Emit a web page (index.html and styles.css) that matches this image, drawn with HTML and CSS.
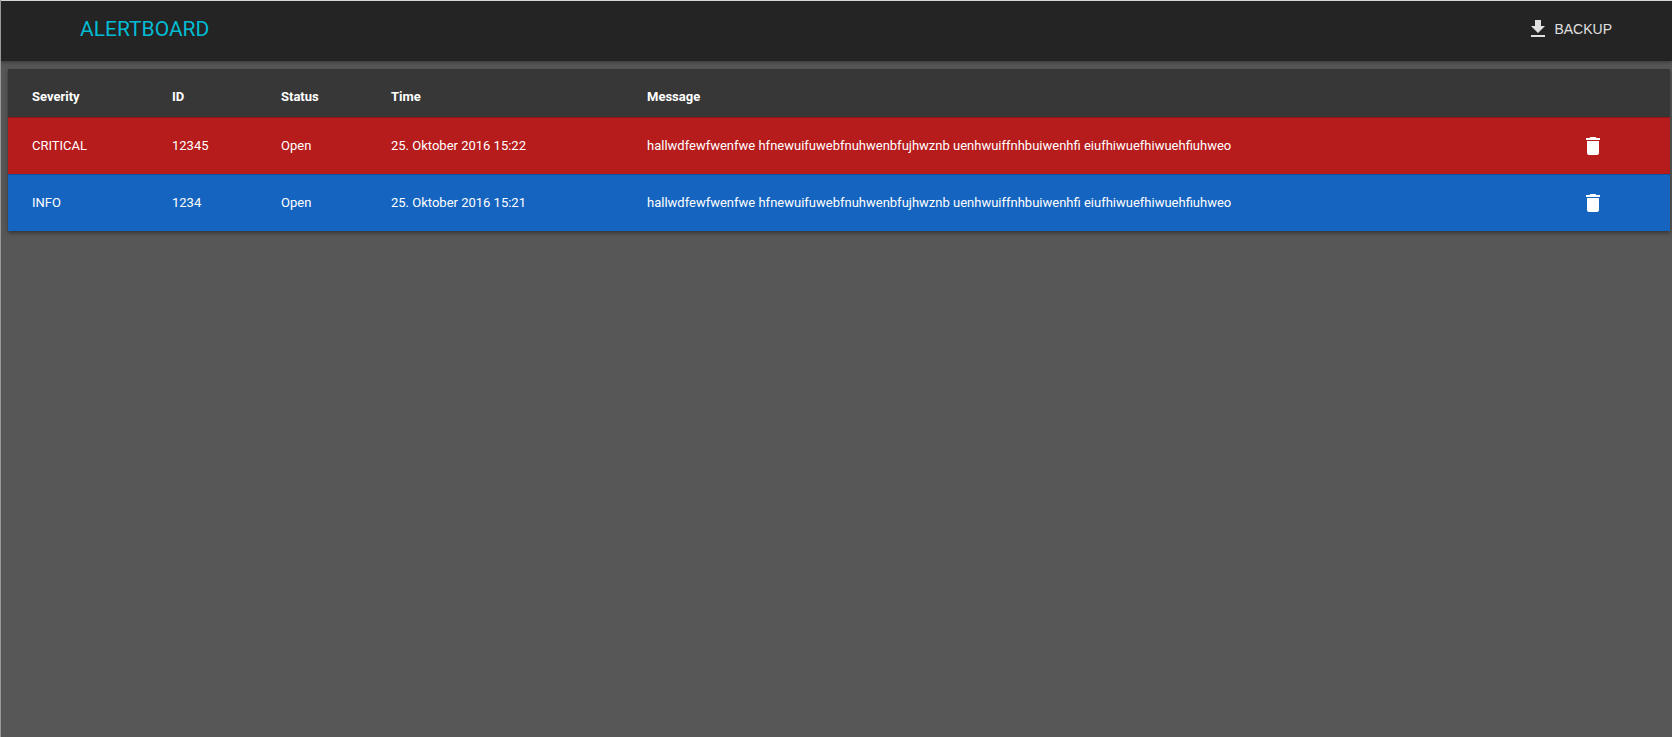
FILE: index.html
```html
<!DOCTYPE html>
<html lang="en">
<head>
<meta charset="utf-8">
<title>Alertboard</title>
<link rel="stylesheet" href="styles.css">
</head>
<body>
<header class="bar">
  <h1 class="brand">ALERTBOARD</h1>
  <button class="backup" type="button">
    <svg class="icon" viewBox="0 0 24 24" aria-hidden="true"><path d="M19 9h-4V3H9v6H5l7 7 7-7zM5 18v2h14v-2H5z"/></svg>
    BACKUP
  </button>
</header>
<main class="content">
  <table class="alerts">
    <colgroup>
      <col class="col-severity"><col class="col-id"><col class="col-status"><col class="col-time"><col><col class="col-action">
    </colgroup>
    <thead>
      <tr><th>Severity</th><th>ID</th><th>Status</th><th>Time</th><th>Message</th><th></th></tr>
    </thead>
    <tbody>
      <tr class="critical">
        <td>CRITICAL</td><td>12345</td><td>Open</td><td>25. Oktober 2016 15:22</td>
        <td>hallwdfewfwenfwe hfnewuifuwebfnuhwenbfujhwznb uenhwuiffnhbuiwenhfi eiufhiwuefhiwuehfiuhweo</td>
        <td><button class="delete" type="button" aria-label="Delete alert 12345"><svg class="icon" viewBox="0 0 24 24" aria-hidden="true"><path d="M6 19c0 1.1.9 2 2 2h8c1.1 0 2-.9 2-2V7H6v12zM19 4h-3.500l-1-1h-5l-1 1H5v2h14V4z"/></svg></button></td>
      </tr>
      <tr class="info">
        <td>INFO</td><td>1234</td><td>Open</td><td>25. Oktober 2016 15:21</td>
        <td>hallwdfewfwenfwe hfnewuifuwebfnuhwenbfujhwznb uenhwuiffnhbuiwenhfi eiufhiwuefhiwuehfiuhweo</td>
        <td><button class="delete" type="button" aria-label="Delete alert 1234"><svg class="icon" viewBox="0 0 24 24" aria-hidden="true"><path d="M6 19c0 1.1.9 2 2 2h8c1.1 0 2-.9 2-2V7H6v12zM19 4h-3.500l-1-1h-5l-1 1H5v2h14V4z"/></svg></button></td>
      </tr>
    </tbody>
  </table>
</main>
</body>
</html>
```
FILE: styles.css
```css
* { box-sizing: border-box; }
body {
  margin: 0;
  min-height: 100vh;
  background: #575757;
  border-left: 1px solid #999;
  color: #fff;
  font-family: Roboto, sans-serif;
}
.bar {
  display: flex;
  align-items: center;
  justify-content: space-between;
  height: 61px;
  margin-left: -1px;
  padding: 0 60px 4px 79px;
  background: #242424;
  border-top: 1px solid #d3d7d3;
  border-left: 1px solid #d3d7d3;
  box-shadow: 0 1px 4px rgba(0, 0, 0, .4);
}
.brand {
  margin: 0;
  color: #00bcd4;
  font-size: 21px;
  line-height: 24px;
  font-weight: 400;
}
button {
  padding: 0;
  border: 0;
  background: none;
  cursor: pointer;
}
.icon {
  display: block;
  width: 24px;
  height: 24px;
  fill: currentColor;
}
.backup {
  display: flex;
  align-items: center;
  gap: 4px;
  color: #e0e0e0;
  font: 14px "Liberation Sans", Arial, sans-serif;
}
.content { padding: 8px 2px 8px 7px; }
.alerts {
  width: 100%;
  border-spacing: 0;
  table-layout: fixed;
  background: #373737;
  box-shadow: 0 2px 4px rgba(0, 0, 0, .4);
  font-size: 13px;
  line-height: 16px;
}
.col-severity { width: 164px; }
.col-id { width: 109px; }
.col-status { width: 110px; }
.col-time { width: 256px; }
.col-action { width: 89px; }
th, td {
  padding: 0;
  text-align: left;
  white-space: nowrap;
}
th:first-child, td:first-child { padding-left: 24px; }
th {
  height: 48px;
  padding-top: 8px;
  font-weight: 700;
}
td {
  height: 57px;
  border-top: 1px solid rgba(0, 0, 0, .2);
}
.critical { background: #b71c1c; }
.info { background: #1565c0; }
.delete {
  display: block;
  color: #fff;
}
```
